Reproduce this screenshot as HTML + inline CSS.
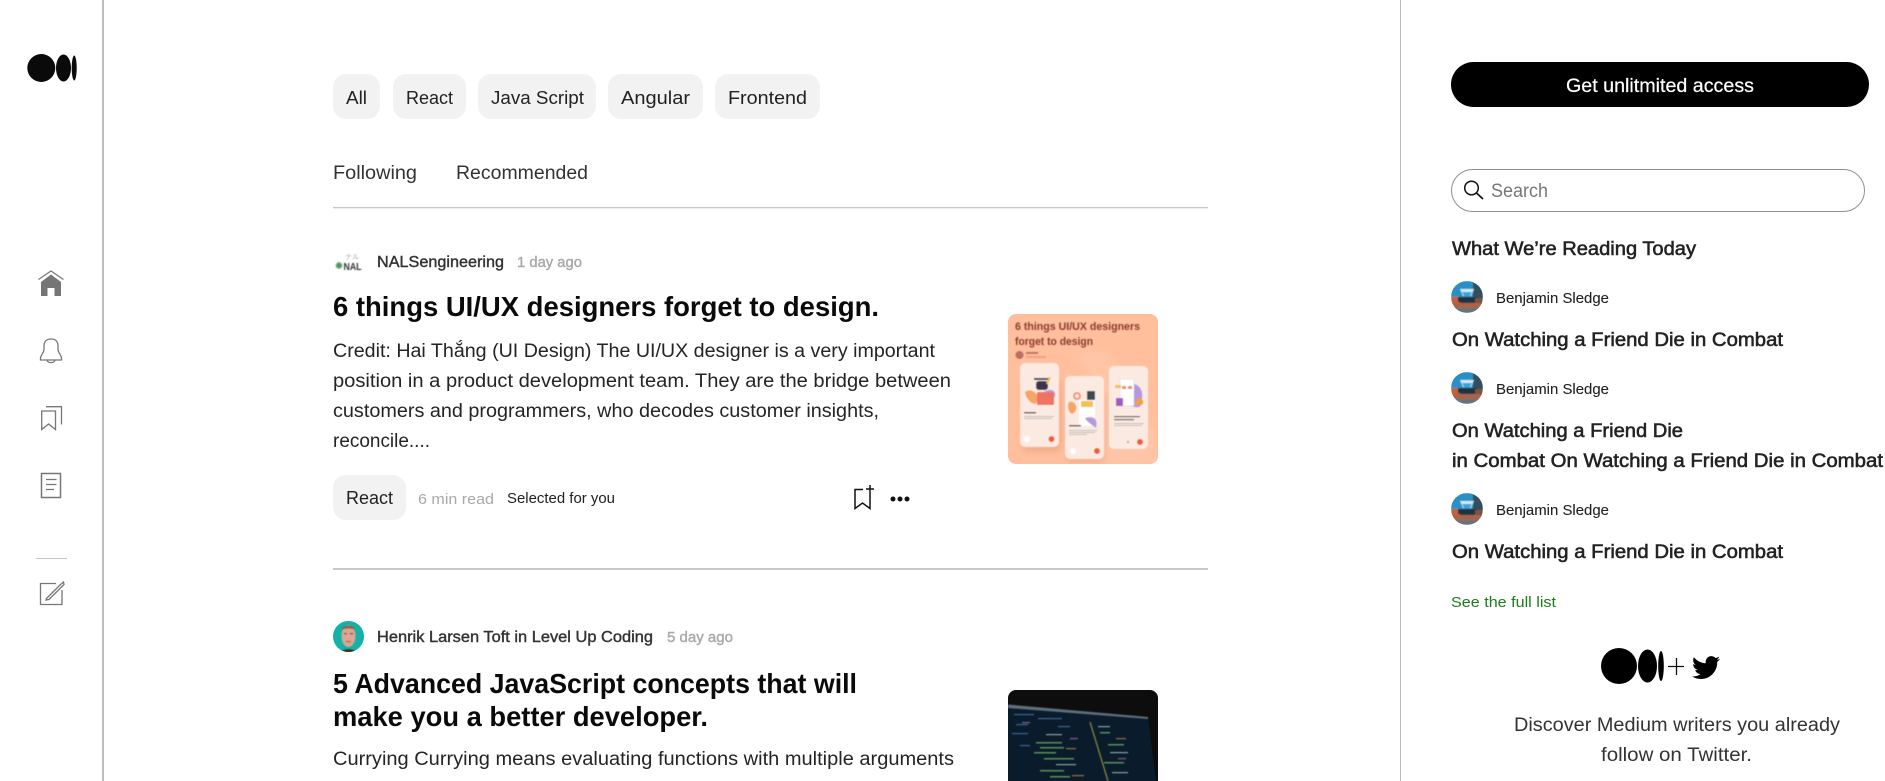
<!DOCTYPE html>
<html lang="en">
<head>
<meta charset="utf-8">
<title>Medium</title>
<style>
html,body{margin:0;padding:0;background:#fff;width:1885px;height:781px;overflow:hidden}
svg{display:block}
text{font-family:"Liberation Sans","DejaVu Sans",sans-serif;white-space:pre}
.chip{font-size:18.5px;fill:#222}
.tab{font-size:19px;fill:#333}
.auth{font-size:15.5px;fill:#333;stroke:#333;stroke-width:.4px}
.time{font-size:15px;fill:#aaa;stroke:#aaa;stroke-width:.45px}
.ttl{font-size:27.5px;font-weight:bold;fill:#0a0a0a}
.desc{font-size:19px;fill:#242424}
.side{font-size:19px;fill:#222;stroke:#222;stroke-width:.55px}
.ben{font-size:15px;fill:#222;stroke:#222;stroke-width:.1px}
.ic{fill:none;stroke:#777;stroke-width:1.3}
</style>
</head>
<body>
<svg width="1885" height="781" viewBox="0 0 1885 781" xmlns="http://www.w3.org/2000/svg">
<defs>
<filter id="b1" x="-5%" y="-5%" width="110%" height="110%"><feGaussianBlur stdDeviation=".45"/></filter>
<filter id="b0" x="-10%" y="-10%" width="120%" height="120%"><feGaussianBlur stdDeviation=".6"/></filter>
<filter id="b2" x="-30%" y="-30%" width="160%" height="160%"><feGaussianBlur stdDeviation="3"/></filter>
<clipPath id="c1"><rect x="1008" y="314" width="150" height="150" rx="8"/></clipPath>
<clipPath id="c2"><rect x="1008" y="690" width="150" height="150" rx="8"/></clipPath>
<clipPath id="avb"><circle cx="16" cy="16" r="16"/></clipPath>
<clipPath id="av2"><circle cx="348.500" cy="636.500" r="15.500"/></clipPath>
<g id="benj">
<g clip-path="url(#avb)">
<g filter="url(#b0)">
<rect width="32" height="32" fill="#2c3c48"/>
<path d="M0 0 H22 V16 H0Z" fill="#2a8fc4"/>
<path d="M22 0 H32 V18 H22Z" fill="#33505f"/>
<path d="M0 16 H9 V25 H0Z" fill="#c2623a"/>
<path d="M9 8 H23 L20 15 H12Z" fill="#cfeaf6"/>
<path d="M11 11 H21 L19 15 H13Z" fill="#38a5dc"/>
<path d="M7 16 H26 V21 H7Z" fill="#22323d"/>
<path d="M2 22 H30 V27 H2Z" fill="#a9644c"/>
<path d="M24 17 H32 V22 H24Z" fill="#7a5540"/>
<path d="M5 27 H27 V32 H5Z" fill="#69737c"/>
</g>
</g>
</g>
</defs>

<!-- frame lines -->
<rect x="102" y="0" width="2" height="781" fill="#bdbdbd"/>
<rect x="1400" y="0" width="1" height="781" fill="#bdbdbd"/>

<!-- medium logo left -->
<g fill="#0a0a0a">
<ellipse cx="41.300" cy="68" rx="14" ry="14"/>
<ellipse cx="63.500" cy="68" rx="7.500" ry="13.500"/>
<ellipse cx="74.200" cy="68" rx="2.500" ry="12.500"/>
</g>

<!-- left nav icons -->
<path d="M38.500 279.500 L51 271 L63.500 279.500" fill="none" stroke="#777" stroke-width="1.2"/>
<path d="M41 282 L51 274.500 L61 282 V296 H54.500 V288 H47.500 V296 H41Z" fill="#757575"/>

<path class="ic" d="M51 339 C46.500 339 44 341.500 44 346 V349 C44 353.500 40.500 354.500 40.500 358.500 V360 H61.500 V358.500 C61.500 354.500 58 353.500 58 349 V346 C58 341.500 55.500 339 51 339Z"/>
<path class="ic" d="M47 360 C47.500 363.500 54.500 363.500 55 360"/>

<path class="ic" d="M41.700 411 H55.500 V429.500 L48.600 424 L41.700 429.500Z"/>
<path class="ic" d="M46 406.700 H61.500 V424.500"/>

<rect class="ic" x="41.500" y="473.500" width="19" height="24" style="stroke-width:1.5"/>
<path class="ic" d="M46 479.500 H56.500 M46 484.500 H56.500 M46 489.500 H54"/>

<rect x="36" y="558" width="31" height="1" fill="#c4c4c4"/>

<path class="ic" d="M56 583.500 H40.500 V604.500 H62 V590"/>
<path class="ic" d="M46.500 598.500 L60 585 L63.500 582 L64 584.500 L49 599.500 L46 600Z"/>

<!-- chips -->
<g fill="#f2f2f2">
<rect x="333" y="74" width="47" height="45" rx="13"/>
<rect x="393" y="74" width="73" height="45" rx="13"/>
<rect x="478" y="74" width="118" height="45" rx="13"/>
<rect x="608" y="74" width="95" height="45" rx="13"/>
<rect x="715" y="74" width="105" height="45" rx="13"/>
<rect x="333" y="475" width="73" height="45" rx="13"/>
</g>
<text class="chip" x="346" y="104" textLength="21" lengthAdjust="spacingAndGlyphs">All</text>
<text class="chip" x="406" y="104" textLength="47" lengthAdjust="spacingAndGlyphs">React</text>
<text class="chip" x="491" y="104" textLength="93" lengthAdjust="spacingAndGlyphs">Java Script</text>
<text class="chip" x="621" y="104" textLength="69" lengthAdjust="spacingAndGlyphs">Angular</text>
<text class="chip" x="728" y="104" textLength="79" lengthAdjust="spacingAndGlyphs">Frontend</text>
<text class="chip" x="346" y="504" textLength="47" lengthAdjust="spacingAndGlyphs">React</text>

<!-- tabs -->
<text class="tab" x="333" y="179" textLength="84" lengthAdjust="spacingAndGlyphs">Following</text>
<text class="tab" x="456" y="179" textLength="132" lengthAdjust="spacingAndGlyphs">Recommended</text>
<rect x="333" y="207" width="875" height="1.300" fill="#c8c8c8"/>

<!-- article 1 -->
<g filter="url(#b1)">
<text x="345" y="259" font-size="7" fill="#aaa">ナル</text>
<circle cx="339" cy="265.500" r="2.800" fill="#4f8f80" stroke="#7fb36a" stroke-width="1.200"/>
<text x="343.500" y="270" font-size="10.500" font-weight="bold" fill="#333" textLength="18" lengthAdjust="spacingAndGlyphs">NAL</text>
</g>
<text class="auth" x="377" y="267" textLength="127" lengthAdjust="spacingAndGlyphs">NALSengineering</text>
<text class="time" x="517" y="267" textLength="65" lengthAdjust="spacingAndGlyphs">1 day ago</text>
<text class="ttl" x="333" y="316" textLength="546" lengthAdjust="spacingAndGlyphs">6 things UI/UX designers forget to design.</text>
<text class="desc" x="333" y="357" textLength="602" lengthAdjust="spacingAndGlyphs">Credit: Hai Thắng (UI Design) The UI/UX designer is a very important</text>
<text class="desc" x="333" y="387" textLength="618" lengthAdjust="spacingAndGlyphs">position in a product development team. They are the bridge between</text>
<text class="desc" x="333" y="417" textLength="546" lengthAdjust="spacingAndGlyphs">customers and programmers, who decodes customer insights,</text>
<text class="desc" x="333" y="447" textLength="97" lengthAdjust="spacingAndGlyphs">reconcile....</text>
<text x="418" y="504" font-size="15" fill="#a8a8a8" textLength="76" lengthAdjust="spacingAndGlyphs">6 min read</text>
<text x="507" y="503" font-size="14.500" fill="#222" textLength="108" lengthAdjust="spacingAndGlyphs">Selected for you</text>

<path d="M863 489.500 H855 V508.500 L862.500 503 L870 508.500 V493" fill="none" stroke="#111" stroke-width="1.500"/>
<path d="M866 489 H874 M870 485 V493" fill="none" stroke="#111" stroke-width="1.500"/>
<g fill="#111"><circle cx="893" cy="499" r="2.500"/><circle cx="900" cy="499" r="2.500"/><circle cx="907" cy="499" r="2.500"/></g>

<!-- thumbnail 1 -->
<g clip-path="url(#c1)">
<rect x="1008" y="314" width="150" height="150" fill="#ffbf9c"/>
<path d="M1064 352 C1085 352 1100 390 1095 464 H1158 V430 C1130 420 1125 380 1110 352Z" fill="#ffc5a6" filter="url(#b2)"/>
<rect x="1022" y="380" width="39" height="72" rx="6" fill="#d98f6d" opacity=".35" filter="url(#b2)"/>
<rect x="1067" y="392" width="39" height="72" rx="6" fill="#d98f6d" opacity=".25" filter="url(#b2)"/>
<g filter="url(#b1)">
<text x="1015" y="330" font-size="11" font-weight="bold" fill="#8a3a30" textLength="125" lengthAdjust="spacingAndGlyphs">6 things UI/UX designers</text>
<text x="1015" y="345" font-size="11" font-weight="bold" fill="#8a3a30" textLength="78" lengthAdjust="spacingAndGlyphs">forget to design</text>
<circle cx="1019.500" cy="355" r="4" fill="#b9705f"/>
<rect x="1026" y="352" width="12" height="2" fill="#c7755e"/>
<rect x="1026" y="356" width="20" height="2" fill="#e8a584"/>
<rect x="1020" y="363" width="39" height="84" rx="5" fill="#fbeae2"/>
<rect x="1065" y="376" width="39" height="83" rx="5" fill="#fbeae2"/>
<rect x="1109" y="366" width="39" height="83" rx="5" fill="#fbeae2"/>
<!-- phone 1 art -->
<path d="M1025 392 C1030 388 1037 392 1038 398 L1036 404 C1030 404 1026 398 1025 392Z" fill="#f5a665"/>
<path d="M1044 392 C1050 388 1056 390 1055 396 C1054 400 1048 398 1044 398Z" fill="#b39ade"/>
<rect x="1036" y="381" width="12" height="9" rx="3" fill="#3d3650"/>
<rect x="1034" y="378" width="16" height="2" fill="#3d3650"/>
<rect x="1037" y="392" width="17" height="13" rx="1" fill="#ee7362"/>
<path d="M1047 384 L1050 377" stroke="#f3c14e" stroke-width="2"/>
<rect x="1024" y="412" width="12" height="1.500" fill="#555"/>
<rect x="1024" y="416" width="30" height="1" fill="#c4bcb8"/>
<rect x="1024" y="418" width="28" height="1" fill="#c4bcb8"/>
<circle cx="1027" cy="439" r="3" fill="#fff"/>
<circle cx="1051.500" cy="439" r="3" fill="#ef5c37"/>
<!-- phone 2 art -->
<circle cx="1077" cy="396" r="3" fill="none" stroke="#ef8a6a" stroke-width="1.800"/>
<rect x="1087" y="391" width="8" height="9" fill="#3b4a54"/>
<path d="M1069 402 C1076 400 1080 410 1072 414 C1068 412 1067 406 1069 402Z" fill="#f5a665"/>
<rect x="1079" y="400" width="16" height="26" fill="#fff"/>
<rect x="1081" y="401" width="12" height="6" fill="#f3c14e"/>
<path d="M1085 418 C1095 415 1098 420 1096 428 C1091 424 1087 422 1085 418Z" fill="#b39ade"/>
<rect x="1069" y="425" width="12" height="1.500" fill="#555"/>
<rect x="1069" y="430" width="28" height="1" fill="#c4bcb8"/>
<rect x="1069" y="432" width="26" height="1" fill="#c4bcb8"/>
<rect x="1069" y="434" width="18" height="1" fill="#c4bcb8"/>
<circle cx="1073" cy="451" r="3" fill="#fff"/>
<circle cx="1097" cy="451" r="3" fill="#ef5c37"/>
<!-- phone 3 art -->
<path d="M1128 385 C1140 380 1146 395 1140 402 C1145 410 1130 408 1125 402Z" fill="#b39ade"/>
<rect x="1120" y="379" width="14" height="27" rx="1" fill="#fff" stroke="#cfc7d8" stroke-width=".4"/>
<rect x="1122" y="386" width="4" height="3" fill="#ef8a6a"/>
<rect x="1128" y="386" width="4" height="3" fill="#ef8a6a"/>
<rect x="1115" y="385" width="6" height="3" fill="#f3c14e"/>
<rect x="1116" y="398" width="7" height="8" fill="#a05ac0"/>
<path d="M1138 398 C1143 397 1146 405 1140 405 L1134 405Z" fill="#f3a23f"/>
<rect x="1114" y="416" width="26" height="1.200" fill="#555"/>
<rect x="1114" y="419" width="20" height="1.200" fill="#555"/>
<rect x="1114" y="423" width="30" height="1" fill="#c4bcb8"/>
<rect x="1114" y="425" width="28" height="1" fill="#c4bcb8"/>
<circle cx="1140" cy="442" r="3" fill="#ef5c37"/>
<circle cx="1128" cy="442" r="1" fill="#999"/>
</g>
</g>

<rect x="333" y="568" width="875" height="2" fill="#c8c8c8"/>

<!-- article 2 -->
<circle cx="348.500" cy="636.500" r="15.500" fill="#12b3a6"/>
<g clip-path="url(#av2)">
<g filter="url(#b1)">
<ellipse cx="348.500" cy="636" rx="7" ry="11" fill="#dca692"/>
<path d="M341.500 630 C342 624 355 624 355.500 630 C352 628 345 628 341.500 630Z" fill="#8a6555"/>
<rect x="344" y="633" width="3" height="1.300" fill="#6a4a40"/>
<rect x="350" y="633" width="3" height="1.300" fill="#6a4a40"/>
<rect x="346" y="641" width="5" height="1.200" fill="#a5604f"/>
<path d="M340 653 C342 648 355 648 357 653Z" fill="#3c2f2b"/>
</g>
</g>
<text class="auth" x="377" y="642" textLength="276" lengthAdjust="spacingAndGlyphs">Henrik Larsen Toft in Level Up Coding</text>
<text class="time" x="667" y="642" textLength="66" lengthAdjust="spacingAndGlyphs">5 day ago</text>
<text class="ttl" x="333" y="693" textLength="524" lengthAdjust="spacingAndGlyphs">5 Advanced JavaScript concepts that will</text>
<text class="ttl" x="333" y="726" textLength="375" lengthAdjust="spacingAndGlyphs">make you a better developer.</text>
<text class="desc" x="333" y="765" textLength="621" lengthAdjust="spacingAndGlyphs">Currying Currying means evaluating functions with multiple arguments</text>

<!-- thumbnail 2 -->
<g clip-path="url(#c2)">
<rect x="1008" y="690" width="150" height="100" fill="#0d0d0e"/>
<path d="M1008 706 L1148 718 L1156 781 H1008Z" fill="#0a1c2c"/>
<path d="M1008 704.500 L1148 717 L1148 719 L1008 708Z" fill="#5f6f7c" filter="url(#b1)"/>
<g filter="url(#b0)" opacity=".8">
<path d="M1090 722 L1108 781" stroke="#a99e40" stroke-width="1.300"/>
<g fill="#4c78b5">
<rect x="1014" y="714" width="20" height="1.200"/><rect x="1038" y="718" width="24" height="1.200"/>
<rect x="1016" y="724" width="12" height="1.200"/><rect x="1058" y="726" width="12" height="1.200"/>
<rect x="1012" y="733" width="16" height="1.200"/><rect x="1020" y="745" width="10" height="1.200"/>
</g>
<g fill="#6fae62">
<rect x="1036" y="742" width="26" height="1.500"/><rect x="1040" y="747" width="24" height="1.500"/>
<rect x="1034" y="752" width="22" height="1.500"/><rect x="1044" y="758" width="30" height="1.500"/>
<rect x="1100" y="732" width="10" height="1.500"/><rect x="1108" y="744" width="16" height="1.500"/>
<rect x="1104" y="762" width="20" height="1.500"/><rect x="1040" y="770" width="24" height="1.500"/>
<rect x="1050" y="776" width="20" height="1.500"/>
</g>
<g fill="#aebecb">
<rect x="1046" y="734" width="16" height="1.200"/><rect x="1056" y="764" width="20" height="1.200"/>
<rect x="1110" y="752" width="18" height="1.200"/><rect x="1112" y="772" width="16" height="1.200"/>
<rect x="1098" y="726" width="12" height="1.200"/>
</g>
<g fill="#c0824e">
<rect x="1066" y="748" width="10" height="1.200"/><rect x="1072" y="775" width="12" height="1.200"/>
<rect x="1116" y="738" width="10" height="1.200"/>
</g>
<g fill="#a870b0">
<rect x="1022" y="722" width="8" height="1.200"/><rect x="1070" y="738" width="8" height="1.200"/><rect x="1118" y="758" width="8" height="1.200"/>
</g>
</g>
</g>

<!-- right column -->
<rect x="1451" y="62" width="418" height="45" rx="22.500" fill="#000"/>
<text x="1566" y="92" font-size="19" fill="#fff" stroke="#fff" stroke-width=".2" textLength="188" lengthAdjust="spacingAndGlyphs">Get unlitmited access</text>

<rect x="1451.500" y="169.500" width="413" height="42" rx="21" fill="#fff" stroke="#8f8f8f" stroke-width="1"/>
<circle cx="1471.500" cy="188" r="6.800" fill="none" stroke="#111" stroke-width="1.500"/>
<path d="M1476.500 193 L1483 199" stroke="#111" stroke-width="1.700" fill="none"/>
<text x="1491" y="197" font-size="19" fill="#777" textLength="57" lengthAdjust="spacingAndGlyphs">Search</text>

<text class="side" x="1452" y="255" textLength="244" lengthAdjust="spacingAndGlyphs">What We’re Reading Today</text>

<use href="#benj" x="1451" y="281"/>
<text class="ben" x="1496" y="303" textLength="113" lengthAdjust="spacingAndGlyphs">Benjamin Sledge</text>
<text class="side" x="1452" y="346" textLength="331" lengthAdjust="spacingAndGlyphs">On Watching a Friend Die in Combat</text>

<use href="#benj" x="1451" y="372"/>
<text class="ben" x="1496" y="394" textLength="113" lengthAdjust="spacingAndGlyphs">Benjamin Sledge</text>
<text class="side" x="1452" y="437" textLength="231" lengthAdjust="spacingAndGlyphs">On Watching a Friend Die</text>
<text class="side" x="1452" y="467" textLength="431" lengthAdjust="spacingAndGlyphs">in Combat On Watching a Friend Die in Combat</text>

<use href="#benj" x="1451" y="493"/>
<text class="ben" x="1496" y="515" textLength="113" lengthAdjust="spacingAndGlyphs">Benjamin Sledge</text>
<text class="side" x="1452" y="558" textLength="331" lengthAdjust="spacingAndGlyphs">On Watching a Friend Die in Combat</text>

<text x="1451" y="607" font-size="15" fill="#1a7f1a" textLength="105" lengthAdjust="spacingAndGlyphs">See the full list</text>

<g fill="#000">
<ellipse cx="1619" cy="666" rx="18" ry="18"/>
<ellipse cx="1647.500" cy="666" rx="9.500" ry="16.500"/>
<ellipse cx="1661" cy="666" rx="2.800" ry="15"/>
</g>
<path d="M1668 666.500 H1684 M1676.500 658 V675" stroke="#111" stroke-width="1.300" fill="none"/>
<path transform="translate(1692 653.500) scale(1.170)" fill="#000" d="M23.953 4.57a10 10 0 01-2.825.775 4.958 4.958 0 002.163-2.723c-.951.555-2.005.959-3.127 1.184a4.92 4.92 0 00-8.384 4.482C7.69 8.095 4.067 6.13 1.64 3.162a4.822 4.822 0 00-.666 2.475c0 1.71.87 3.213 2.188 4.096a4.904 4.904 0 01-2.228-.616v.06a4.923 4.923 0 003.946 4.827 4.996 4.996 0 01-2.212.085 4.936 4.936 0 004.604 3.417 9.867 9.867 0 01-6.102 2.105c-.39 0-.779-.023-1.17-.067a13.995 13.995 0 007.557 2.209c9.053 0 13.998-7.496 13.998-13.985 0-.21 0-.42-.015-.63A9.935 9.935 0 0024 4.59z"/>

<text x="1514" y="731" font-size="19" fill="#333" textLength="326" lengthAdjust="spacingAndGlyphs">Discover Medium writers you already</text>
<text x="1601" y="761" font-size="19" fill="#333" textLength="151" lengthAdjust="spacingAndGlyphs">follow on Twitter.</text>
</svg>
</body>
</html>
